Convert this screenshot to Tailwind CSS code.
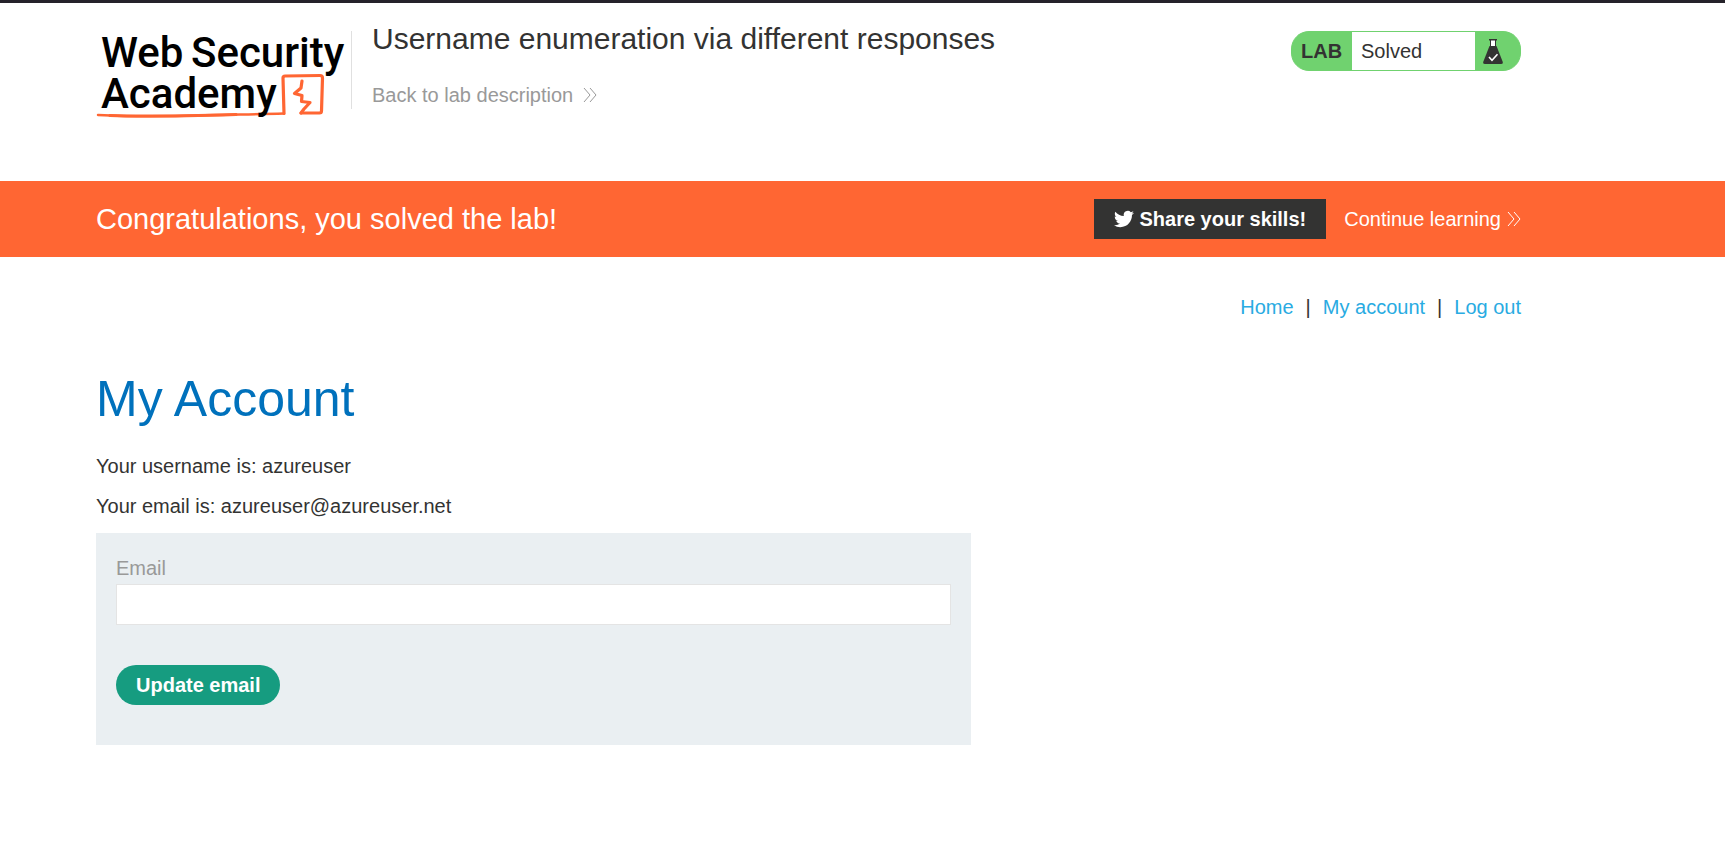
<!DOCTYPE html>
<html lang="en">
<head>
<meta charset="utf-8">
<title>Username enumeration via different responses</title>
<script src="https://cdn.jsdelivr.net/npm/@tailwindcss/browser@4"></script>
</head>
<body class="min-h-screen border-t-3 border-[#25222a] bg-white font-['Liberation_Sans',Arial,sans-serif] text-[20px] leading-[30px] text-[#333332]">
  <header class="flex h-[178px] items-start pt-7 pr-[204px] pl-24">
    <a href="#" aria-label="Web Security Academy" class="block shrink-0">
      <svg class="block h-[92px] w-[255px] overflow-visible" viewBox="0 0 255 92">
        <g fill="none" stroke="#ff6633" stroke-linecap="round" stroke-linejoin="round">
          <path d="M2 84 C40 86 70 85.500 100 84.500 S155 83.500 188 82.500" stroke-width="2.500"/>
          <path d="M14 84.500 C50 86 90 85 140 83.500" stroke-width="3"/>
          <path d="M188 82.500 L187 47 Q187 45 189 45 L224 44.500 Q226.500 44.500 226.500 47 L225.500 80 Q225.500 82 223.500 82 L205 82" stroke-width="3.200"/>
          <path d="M206 50 L205 57 L198.500 62.500 L206 64.500 L205.500 70.500 L214 71.500 L208 78 L205 82" stroke-width="3.200"/>
        </g>
        <g fill="#000" font-family="Roboto, sans-serif" font-weight="500" font-size="42">
          <text x="5" y="36">Web</text>
          <text x="95" y="36">Security</text>
          <text x="5" y="77">Academy</text>
        </g>
      </svg>
    </a>
    <div class="h-[78px] w-px shrink-0 bg-[#e0e0e0]"></div>
    <div class="-mt-3 flex min-w-0 grow flex-col items-start gap-[21px] pl-5">
      <h2 class="text-[30px] leading-10">Username enumeration via different responses</h2>
      <a href="#" class="flex items-center gap-2 text-[#999999]">Back to lab description
        <svg class="h-4 w-[18px]" viewBox="0 0 18 16" fill="none" stroke="currentColor" stroke-width="1"><path d="M3 1l6 7-6 7M9 1l6 7-6 7"/></svg>
      </a>
    </div>
    <div class="flex h-10 w-[230px] shrink-0 overflow-hidden rounded-[18px] border border-[#70d26f] bg-[#70d26f]">
      <p class="w-[60px] pl-[9px] leading-[38px] font-bold">LAB</p>
      <p class="w-[123px] bg-white pl-[9px] leading-[38px]">Solved</p>
      <svg class="mt-[7px] ml-2 h-[26px] w-5" viewBox="0 0 20 26">
        <path d="M7 1h6v8H7z" fill="#fff"/>
        <path d="M6 0h8v1.500h-1v6h-1v-6H8v6H7v-6H6z" fill="#333332"/>
        <path d="M6.500 7h7L19.600 22.500Q20.500 25 18 25H2Q-.5 25 .4 22.500z" fill="#333332"/>
        <path d="M6 18l3 3.200 5.500-6" fill="none" stroke="#fff" stroke-width="1.600"/>
      </svg>
    </div>
  </header>

  <section class="flex h-[76px] items-center bg-[#ff6633] pr-[204px] pl-24 text-white">
    <h4 class="grow text-[29px]">Congratulations, you solved the lab!</h4>
    <button type="button" class="flex h-10 items-center gap-[5px] bg-[#333332] px-5 font-bold">
      <svg class="h-5 w-5" viewBox="0 0 24 24" fill="#fff"><path d="M23.950 4.570a10 10 0 01-2.820.770 4.960 4.960 0 002.160-2.720c-.95.550-2 .960-3.120 1.180a4.920 4.920 0 00-8.390 4.490C7.690 8.100 4.070 6.130 1.640 3.160a4.820 4.820 0 00-.670 2.480c0 1.710.870 3.210 2.190 4.100a4.900 4.900 0 01-2.230-.620v.060a4.920 4.920 0 003.950 4.830 5 5 0 01-2.210.080 4.940 4.940 0 004.600 3.420A9.870 9.870 0 010 19.540a13.990 13.990 0 007.560 2.210c9.050 0 14-7.500 14-13.980 0-.210 0-.420-.020-.630a9.940 9.940 0 002.460-2.550z"/></svg>
      Share your skills!
    </button>
    <a href="#" class="ml-[18px] flex items-center gap-[3px]">Continue learning
      <svg class="h-4 w-[17px]" viewBox="0 0 17 16" fill="none" stroke="currentColor" stroke-width="1"><path d="M4 1l6 7-6 7M10 1l6 7-6 7"/></svg>
    </a>
  </section>

  <main class="pt-[35px] pr-[204px] pl-24">
    <nav class="flex justify-end gap-3">
      <a href="#" class="text-[#29abe2]">Home</a><span>|</span>
      <a href="#" class="text-[#29abe2]">My account</a><span>|</span>
      <a href="#" class="text-[#29abe2]">Log out</a>
    </nav>
    <h1 class="mt-[47px] text-[50px] leading-[60px] text-[#0071bc]">My Account</h1>
    <div class="mt-[22px] flex flex-col gap-[10px]">
      <p>Your username is: azureuser</p>
      <p>Your email is: azureuser@azureuser.net</p>
    </div>
    <form class="mt-3 max-w-[875px] bg-[#eaeff2] px-5 pt-5 pb-10">
      <label for="email" class="block leading-[31px] text-[#999999]">Email</label>
      <input id="email" type="email" class="block h-[41px] w-full border border-[#e4e4e4] bg-white px-2 outline-none">
      <button type="button" class="mt-10 block h-10 rounded-full bg-[#169c80] px-5 font-bold text-white">Update email</button>
    </form>
  </main>
</body>
</html>
